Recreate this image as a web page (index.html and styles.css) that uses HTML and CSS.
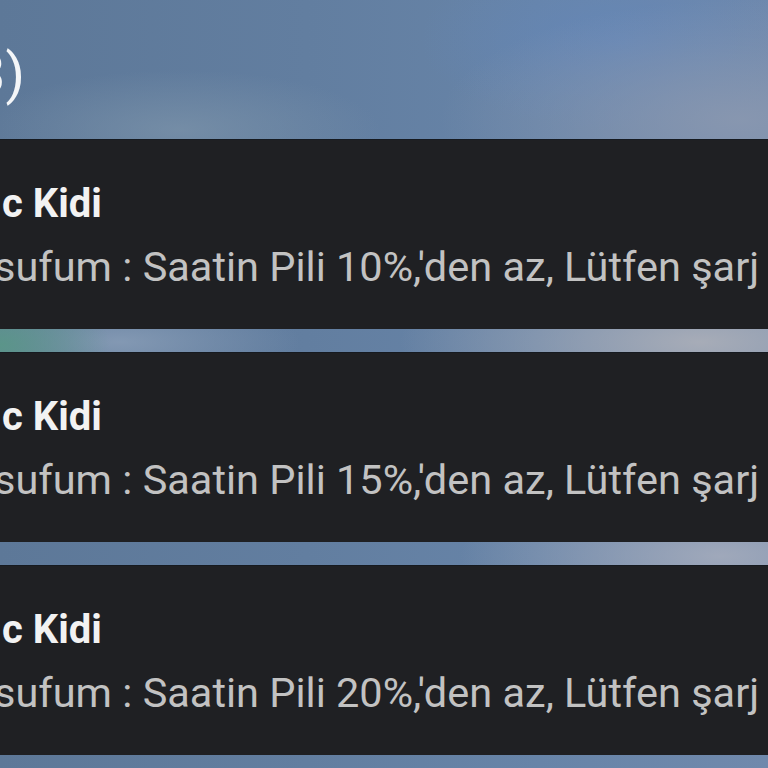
FILE: index.html
```html
<!DOCTYPE html>
<html lang="tr">
<head>
<meta charset="utf-8">
<link rel="stylesheet" href="styles.css">
</head>
<body>
<div class="screen">
  <div class="header"><span class="count">3)</span></div>
  <div class="list">
    <div class="card">
      <div class="title">c Kidi</div>
      <div class="msg">sufum : Saatin Pili 10%,'den az, Lütfen şarj</div>
    </div>
    <div class="card">
      <div class="title">c Kidi</div>
      <div class="msg">sufum : Saatin Pili 15%,'den az, Lütfen şarj</div>
    </div>
    <div class="card">
      <div class="title">c Kidi</div>
      <div class="msg">sufum : Saatin Pili 20%,'den az, Lütfen şarj</div>
    </div>
  </div>
</div>
</body>
</html>
```

FILE: styles.css
```css
html, body {
  margin: 0;
  padding: 0;
  height: 100%;
}
body {
  font-family: Roboto, "Noto Sans", sans-serif;
  overflow: hidden;
  background:
    radial-gradient(ellipse 110px 60px at 0px 345px, rgba(90,150,136,0.95), rgba(90,150,136,0) 100%),
    radial-gradient(ellipse 180px 50px at 120px 342px, rgba(140,160,185,0.8), rgba(140,160,185,0) 100%),
    radial-gradient(ellipse 300px 90px at 700px 342px, rgba(170,174,184,0.95), rgba(170,174,184,0) 100%),
    radial-gradient(ellipse 260px 80px at 720px 556px, rgba(165,172,188,0.9), rgba(165,172,188,0) 100%),
    radial-gradient(ellipse 300px 120px at 740px 120px, rgba(138,152,176,0.9), rgba(138,152,176,0) 100%),
    radial-gradient(ellipse 200px 90px at 620px 40px, rgba(100,135,185,0.8), rgba(100,135,185,0) 100%),
    radial-gradient(ellipse 200px 60px at 180px 130px, rgba(125,148,170,0.7), rgba(125,148,170,0) 100%),
    linear-gradient(90deg, #5d7898 0%, #627ea0 40%, #6784a8 70%, #7089ac 100%);
}
.screen {
  display: flex;
  flex-direction: column;
}
.header {
  height: 139px;
  box-sizing: border-box;
  padding-top: 42px;
  overflow: hidden;
}
.count {
  display: block;
  margin-left: -26px;
  font-size: 56px;
  line-height: 64px;
  color: #f4f6f8;
  font-weight: 400;
}
.list {
  display: flex;
  flex-direction: column;
  gap: 23px;
}
.card {
  height: 190px;
  box-sizing: border-box;
  background: #1f2023;
  border-top: 1px solid #161a20;
  padding-top: 40px;
  overflow: hidden;
  white-space: nowrap;
}
.title {
  font-size: 40px;
  line-height: 48px;
  font-weight: 700;
  color: #f2f2f2;
  padding-left: 2px;
}
.msg {
  margin-top: 14px;
  margin-left: -6px;
  font-size: 41.5px;
  line-height: 50px;
  font-weight: 400;
  color: #c2c2c2;
}
```
